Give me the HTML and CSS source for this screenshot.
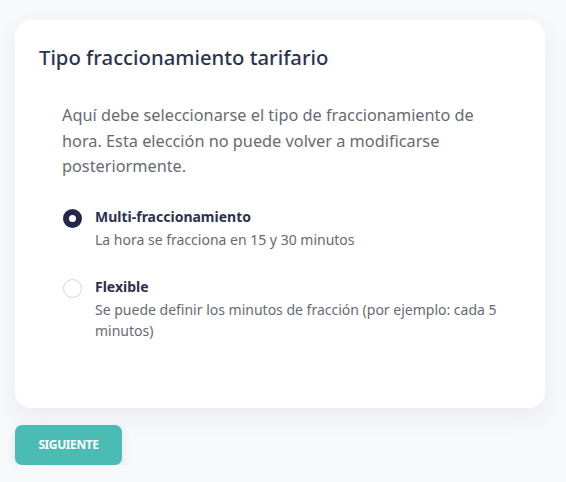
FILE: index.html
```html
<!DOCTYPE html>
<html lang="es">
<head>
    <meta charset="UTF-8">
    <meta name="viewport" content="width=device-width, initial-scale=1.0">
    <title>Tipo fraccionamiento tarifario</title>
    <link rel="stylesheet" href="styles.css">
</head>
<body>
    <div class="card">
        <h2 class="card-title">Tipo fraccionamiento tarifario</h2>
        <div class="card-body">
            <p class="intro">Aquí debe seleccionarse el tipo de fraccionamiento de hora. Esta elección no puede volver a modificarse posteriormente.</p>
            <div class="options">
                <label class="option">
                    <span class="radio checked"></span>
                    <span class="option-text">
                        <span class="option-name">Multi-fraccionamiento</span>
                        <span class="option-desc">La hora se fracciona en 15 y 30 minutos</span>
                    </span>
                </label>
                <label class="option">
                    <span class="radio"></span>
                    <span class="option-text">
                        <span class="option-name">Flexible</span>
                        <span class="option-desc">Se puede definir los minutos de fracción (por ejemplo: cada 5 minutos)</span>
                    </span>
                </label>
            </div>
        </div>
    </div>
    <button class="btn-next">SIGUIENTE</button>
</body>
</html>
```

FILE: styles.css
```css
body {
    margin: 0;
    padding: 20px 21px 0 15px;
    background-color: #f7f8fa;
    font-family: "Noto Sans", "Open Sans", sans-serif;
    color: #2b3150;
}
.card {
    background-color: #fff;
    border-radius: 16px;
    box-shadow: 0 8px 24px rgba(30, 40, 70, 0.06);
    padding: 24px 24px 67px 24px;
}
.card-title {
    margin: 0;
    font-size: 20.3px;
    font-weight: 500;
    line-height: 26px;
    color: #2b3350;
}
.card-body {
    padding: 33px 20px 0 23px;
}
.intro {
    margin: 0;
    font-size: 16.3px;
    line-height: 25.5px;
    color: #666a73;
}
.options {
    margin-top: 26px;
    padding-left: 1px;
    display: flex;
    flex-direction: column;
    gap: 26px;
}
.option {
    display: flex;
    gap: 13px;
    align-items: flex-start;
}
.radio {
    flex: none;
    width: 19px;
    height: 19px;
    margin-top: 3px;
    box-sizing: border-box;
    border-radius: 50%;
    border: 1px solid #d6d8dd;
    background-color: #fff;
}
.radio.checked {
    border: 6.5px solid #23274b;
}
.option-text {
    display: flex;
    flex-direction: column;
}
.option-name {
    font-size: 14px;
    font-weight: 700;
    line-height: 21px;
    color: #2b3150;
}
.option-desc {
    font-size: 14px;
    line-height: 21px;
    color: #666a73;
    margin-top: 2px;
}
.btn-next {
    margin-top: 17px;
    width: 107px;
    height: 40px;
    border: none;
    border-radius: 7px;
    background-color: #4bbcb3;
    box-shadow: 0 3px 8px rgba(40, 60, 80, 0.12);
    color: #fff;
    font-family: "Noto Sans", "Open Sans", sans-serif;
    font-size: 12px;
    font-weight: 700;
    letter-spacing: -0.4px;
}
```
